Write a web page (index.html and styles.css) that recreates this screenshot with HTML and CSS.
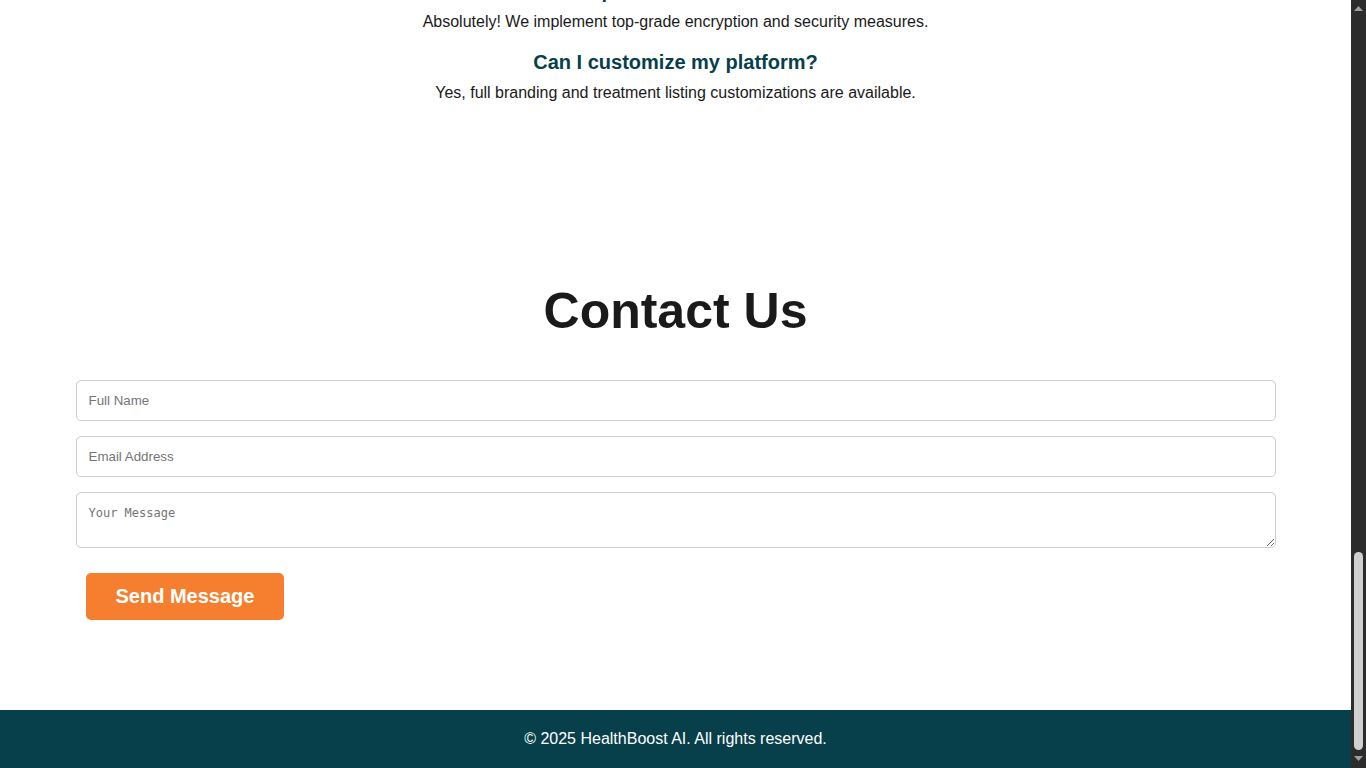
FILE: index.html
```html
<!DOCTYPE html>
<html lang="en">
<head>
<meta charset="utf-8">
<meta name="viewport" content="width=device-width, initial-scale=1">
<title>HealthBoost AI</title>
<link rel="stylesheet" href="styles.css">
</head>
<body>
<div class="page">
  <main>
    <section class="section faq">
      <div class="faq-item">
        <h3>Is patient data safe?</h3>
        <p>Absolutely! We implement top-grade encryption and security measures.</p>
      </div>
      <div class="faq-item">
        <h3>Can I customize my platform?</h3>
        <p>Yes, full branding and treatment listing customizations are available.</p>
      </div>
    </section>
    <section class="section contact">
      <h2>Contact Us</h2>
      <form class="contact-form">
        <input class="field" type="text" placeholder="Full Name" aria-label="Full Name">
        <input class="field" type="email" placeholder="Email Address" aria-label="Email Address">
        <textarea class="field message" placeholder="Your Message" aria-label="Your Message"></textarea>
        <button class="send" type="submit">Send Message</button>
      </form>
    </section>
  </main>
  <footer class="footer">
    <p>© 2025 HealthBoost AI. All rights reserved.</p>
  </footer>
</div>
<div class="scrollbar" aria-hidden="true">
  <svg class="arrow" viewBox="0 0 9 5"><path d="M4.5 0 9 5H0z"/></svg>
  <div class="track"><div class="thumb"></div></div>
  <svg class="arrow" viewBox="0 0 9 5"><path d="M0 0H9L4.5 5z"/></svg>
</div>
</body>
</html>
```

FILE: styles.css
```css
* {
  box-sizing: border-box;
}

body {
  margin: 0;
  display: flex;
  height: 100vh;
  overflow: hidden;
  background: #fff;
  color: #1a1a1a;
  font-family: Arial, "Liberation Sans", sans-serif;
  font-size: 16px;
}

h2, h3, p {
  margin: 0;
}

/* The view rests at the end of the page */
.page {
  flex: 1;
  min-width: 0;
  display: flex;
  flex-direction: column;
  justify-content: flex-end;
  overflow: hidden;
}

.section {
  padding: 80px 20px;
  text-align: center;
}

.faq-item {
  margin-bottom: 20px;
}

.faq-item h3 {
  margin-bottom: 10px;
  color: #073f4b;
  font-size: 20px;
  line-height: 23px;
}

.faq-item p,
.footer p {
  line-height: 18px;
}

.contact h2 {
  margin-bottom: 40px;
  font-size: 50px;
  line-height: 58px;
}

.contact-form {
  display: flex;
  flex-direction: column;
  gap: 15px;
  max-width: 1200px;
  margin: 0 auto;
}

.field {
  width: 100%;
  padding: 12px;
  border: 1px solid #ccc;
  border-radius: 5px;
  background: #fff;
  font-family: Arial, "Liberation Sans", sans-serif;
  line-height: 15px;
}

.field::placeholder {
  color: #757575;
}

.message {
  height: 56px;
  padding-top: 13px;
  font-family: "DejaVu Sans Mono", monospace;
  font-size: 12px;
  resize: vertical;
}

.send {
  align-self: flex-start;
  margin: 10px;
  padding: 12px 30px;
  border: 0;
  border-radius: 5px;
  background: #f57f2f;
  color: #fff;
  font-family: Arial, "Liberation Sans", sans-serif;
  font-size: 20px;
  font-weight: bold;
  line-height: 23px;
  cursor: pointer;
}

.footer {
  padding: 20px;
  background: #073f4b;
  color: #fff;
  text-align: center;
}

.scrollbar {
  display: flex;
  flex-direction: column;
  align-items: center;
  gap: 6px;
  width: 15px;
  padding: 6px 0 7px;
  background: #2c2c2c;
}

.arrow {
  width: 9px;
  height: 5px;
  fill: #9f9f9f;
}

.track {
  flex: 1;
  display: flex;
  align-items: flex-end;
}

.thumb {
  width: 9px;
  height: 27%;
  border-radius: 5px;
  background: #d0d0d0;
}
```
